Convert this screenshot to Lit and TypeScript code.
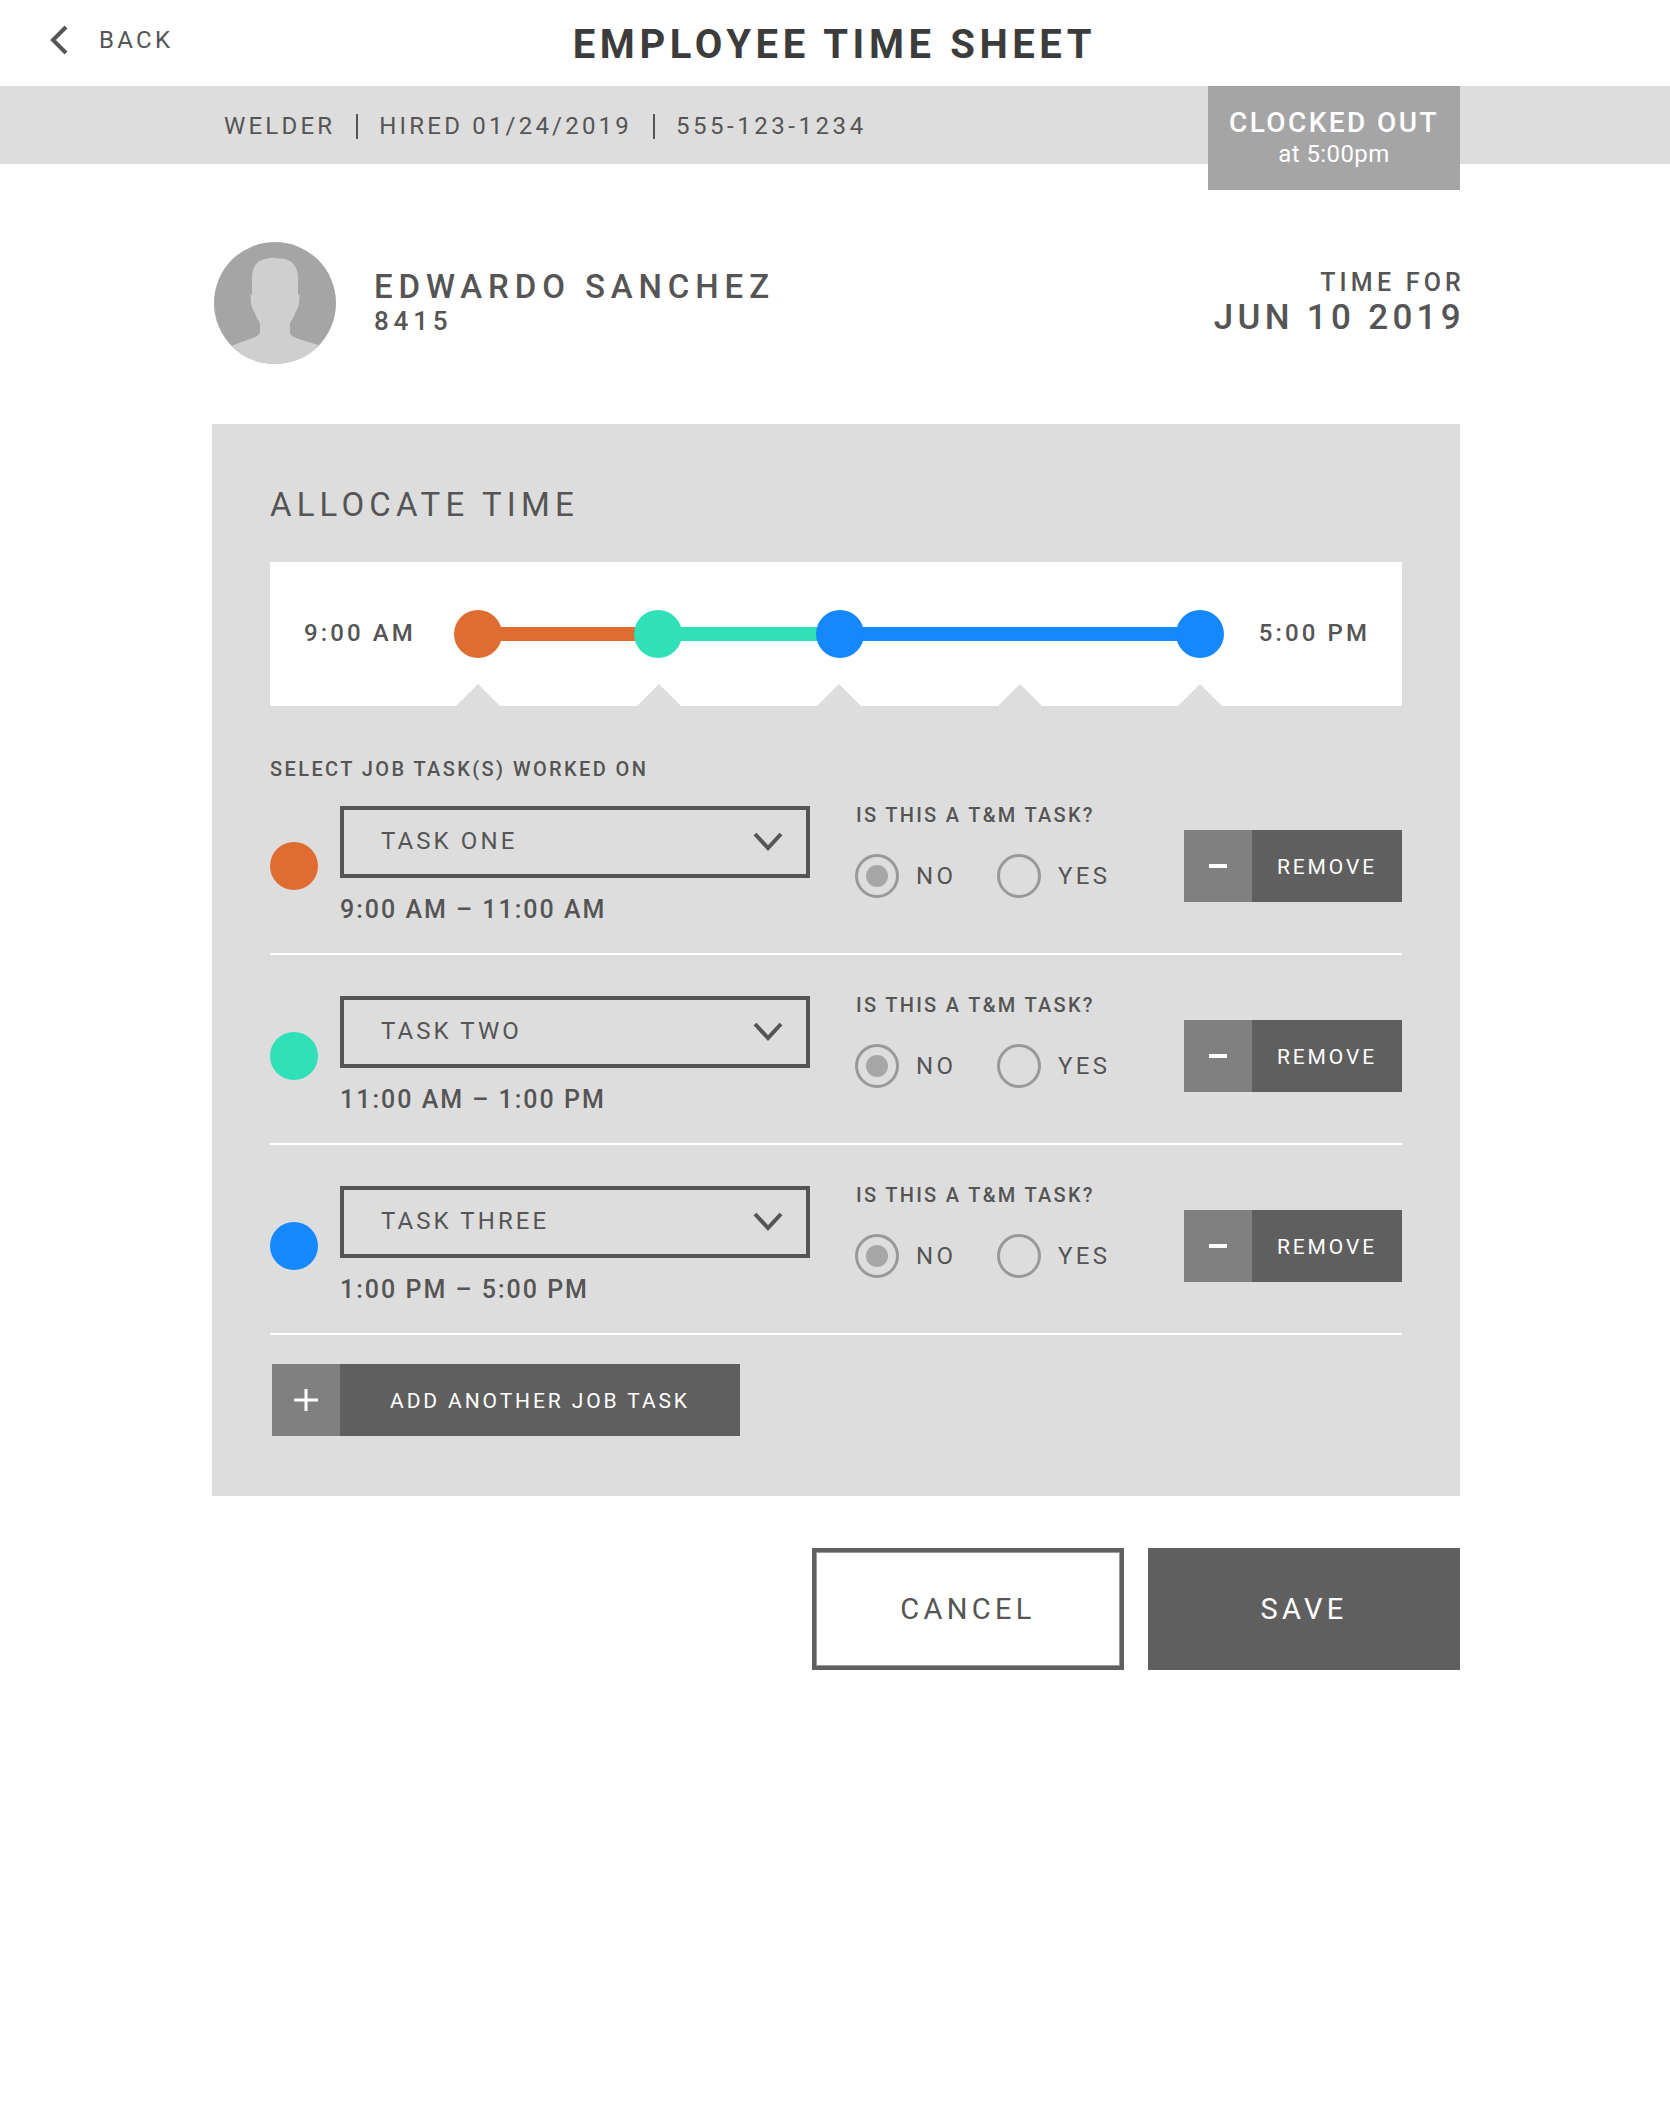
import { LitElement, html, css, svg } from "lit";
import { customElement } from "lit/decorators.js";

const ORANGE = "#df6c30";
const TEAL = "#2fe0b8";
const BLUE = "#1488fc";

const tasks = [
  { name: "TASK ONE", time: "9:00 AM – 11:00 AM", color: ORANGE },
  { name: "TASK TWO", time: "11:00 AM – 1:00 PM", color: TEAL },
  { name: "TASK THREE", time: "1:00 PM – 5:00 PM", color: BLUE },
];

// stops on the slider, offsets from the left edge of the track
const stops = [
  { w: 133, color: ORANGE },
  { w: 134, color: TEAL },
  { w: 314, color: BLUE },
];
const notches = [24, 205, 385, 566, 746];

const chevron = svg`<path d="M2 2 L15 16 L28 2" fill="none" stroke="#555" stroke-width="4"/>`;

@customElement("app-root")
export class AppRoot extends LitElement {
  static styles = css`
    :host {
      display: block;
      min-height: 2116px;
      background: #fff;
      font-family: Roboto, "Liberation Sans", sans-serif;
      color: #555;
    }
    .header {
      display: grid;
      grid-template-columns: 1fr auto 1fr;
      align-items: center;
      height: 86px;
      padding-left: 49px;
    }
    .back {
      display: flex;
      align-items: center;
      gap: 30px;
      font-size: 24px;
      letter-spacing: 3.3px;
      margin-top: -6px;
    }
    .back svg {
      width: 20px;
      height: 30px;
    }
    .title {
      font-size: 40px;
      font-weight: 700;
      letter-spacing: 4.6px;
      color: #3c3c3c;
      margin: 2px 0 0 -50px;
    }
    .subbar {
      height: 78px;
      background: #ddd;
    }
    .wrap {
      width: 1248px;
      margin-left: 212px;
    }
    .subbar .wrap {
      display: flex;
      height: 78px;
    }
    .meta {
      display: flex;
      align-items: center;
      gap: 21px;
      padding: 2px 0 0 12px;
      font-size: 24px;
      letter-spacing: 3.2px;
    }
    .meta i {
      width: 2px;
      height: 25px;
      background: #555;
    }
    .meta .phone {
      letter-spacing: 3.55px;
    }
    .status {
      margin-left: auto;
      flex: 0 0 252px;
      height: 104px;
      box-sizing: border-box;
      padding-top: 21px;
      background: #a5a5a5;
      color: #fff;
      text-align: center;
    }
    .status b {
      display: block;
      font-size: 28px;
      font-weight: 500;
      line-height: 32px;
      letter-spacing: 2.4px;
    }
    .status span {
      display: block;
      font-size: 24px;
      line-height: 30px;
      letter-spacing: 0.4px;
    }
    .profile {
      display: flex;
      align-items: center;
      margin-top: 78px;
      margin-bottom: 60px;
      height: 122px;
      padding-left: 2px;
    }
    .avatar {
      width: 122px;
      height: 122px;
      flex: none;
    }
    .who {
      margin-left: 38px;
      margin-top: -2px;
    }
    .who h2 {
      margin: 0;
      font-size: 33px;
      font-weight: 500;
      line-height: 36px;
      letter-spacing: 5.9px;
    }
    .who p {
      margin: 1px 0 0;
      font-size: 26px;
      font-weight: 500;
      line-height: 30px;
      letter-spacing: 4.8px;
    }
    .when {
      margin-left: auto;
      margin-right: -5px;
      text-align: right;
    }
    .when p {
      margin: -1px 0 0;
      font-size: 25px;
      font-weight: 500;
      line-height: 30px;
      letter-spacing: 4.2px;
    }
    .when h2 {
      margin: 0;
      font-size: 35px;
      font-weight: 500;
      line-height: 40px;
      letter-spacing: 4.3px;
    }
    .panel {
      background: #ddd;
      padding: 61px 58px 60px;
    }
    .panel h3 {
      margin: 0 0 37px;
      font-size: 33px;
      font-weight: 400;
      line-height: 40px;
      letter-spacing: 5.15px;
    }
    .slider {
      position: relative;
      display: flex;
      align-items: center;
      height: 144px;
      padding: 0 32px 0 34px;
      background: #fff;
      font-size: 24px;
      font-weight: 500;
      letter-spacing: 3.1px;
    }
    .slider .start {
      flex: 0 0 150px;
      margin-top: -2px;
    }
    .slider .end {
      margin-left: auto;
      margin-top: -2px;
    }
    .track {
      display: flex;
      align-items: center;
      width: 770px;
    }
    .knob {
      flex: none;
      width: 48px;
      height: 48px;
      border-radius: 50%;
      z-index: 1;
    }
    .seg {
      height: 14px;
      margin: 0 -1px;
    }
    .notch {
      position: absolute;
      bottom: 0;
      width: 0;
      height: 0;
      border-left: 22px solid transparent;
      border-right: 22px solid transparent;
      border-bottom: 22px solid #ddd;
      margin-left: -22px;
    }
    .section {
      margin-top: 51px;
      font-size: 20px;
      font-weight: 500;
      line-height: 24px;
      letter-spacing: 2.4px;
    }
    .row {
      display: flex;
      align-items: flex-start;
      padding: 41px 0 28px;
      border-bottom: 2px solid #fff;
    }
    .row.first {
      padding-top: 25px;
    }
    .dot {
      flex: none;
      width: 48px;
      height: 48px;
      margin: 36px 22px 0 0;
      border-radius: 50%;
    }
    .task {
      flex: 0 0 470px;
    }
    .select {
      display: flex;
      align-items: center;
      justify-content: space-between;
      box-sizing: border-box;
      height: 72px;
      padding: 0 23px 2px 37px;
      border: 4px solid #555;
      font-size: 24px;
      letter-spacing: 3.1px;
    }
    .select svg {
      width: 30px;
      height: 20px;
      margin-top: 2px;
    }
    .time {
      margin-top: 17px;
      font-size: 25px;
      font-weight: 500;
      line-height: 30px;
      letter-spacing: 2px;
    }
    .tm {
      margin-left: 45px;
    }
    .tm label {
      display: block;
      margin-left: 1px;
      font-size: 20px;
      font-weight: 500;
      line-height: 18px;
      letter-spacing: 2.3px;
    }
    .options {
      display: flex;
      margin-top: 30px;
    }
    .option {
      display: flex;
      align-items: center;
      gap: 17px;
      width: 142px;
      font-size: 24px;
      letter-spacing: 3.4px;
    }
    .radio {
      display: flex;
      align-items: center;
      justify-content: center;
      box-sizing: border-box;
      width: 44px;
      height: 44px;
      border: 3px solid #999;
      border-radius: 50%;
    }
    .radio i {
      width: 22px;
      height: 22px;
      border-radius: 50%;
      background: #a6a6a6;
    }
    .btn {
      display: flex;
      align-items: stretch;
      height: 72px;
      background: #5f5f5f;
      color: #fff;
    }
    .btn .icon {
      display: flex;
      align-items: center;
      justify-content: center;
      flex: 0 0 68px;
      background: #808080;
    }
    .btn .label {
      display: flex;
      align-items: center;
      justify-content: center;
      flex: 1;
      padding-top: 2px;
      font-size: 21px;
      letter-spacing: 2.9px;
    }
    .remove {
      width: 218px;
      margin: 24px 0 0 auto;
    }
    .add {
      width: 468px;
      margin: 29px 0 0 2px;
    }
    .actions {
      display: flex;
      justify-content: flex-end;
      gap: 24px;
      margin-top: 52px;
    }
    .action {
      display: flex;
      align-items: center;
      justify-content: center;
      box-sizing: border-box;
      width: 312px;
      height: 122px;
      border: 4px solid #5f5f5f;
      box-shadow: inset 0 0 0 1px #9a9a9a;
      font-size: 29px;
      letter-spacing: 4.3px;
    }
    .action.save {
      background: #5f5f5f;
      box-shadow: none;
      color: #fff;
    }
  `;

  private renderRow(t: (typeof tasks)[number], i: number) {
    return html`
      <div class="row ${i === 0 ? "first" : ""}">
        <div class="dot" style="background:${t.color}"></div>
        <div class="task">
          <div class="select">
            <span>${t.name}</span>
            <svg viewBox="0 0 30 20">${chevron}</svg>
          </div>
          <div class="time">${t.time}</div>
        </div>
        <div class="tm">
          <label>IS THIS A T&amp;M TASK?</label>
          <div class="options">
            <div class="option"><span class="radio"><i></i></span>NO</div>
            <div class="option"><span class="radio"></span>YES</div>
          </div>
        </div>
        <div class="btn remove">
          <div class="icon">
            <svg width="18" height="4" viewBox="0 0 18 4"><rect width="18" height="4" fill="#fff"/></svg>
          </div>
          <div class="label">REMOVE</div>
        </div>
      </div>
    `;
  }

  render() {
    return html`
      <div class="header">
        <div class="back">
          <svg viewBox="0 0 20 30"><path d="M17 2 L4 15 L17 28" fill="none" stroke="#555" stroke-width="4"/></svg>
          <span>BACK</span>
        </div>
        <div class="title">EMPLOYEE TIME SHEET</div>
        <div></div>
      </div>
      <div class="subbar">
        <div class="wrap">
          <div class="meta">
            <span>WELDER</span><i></i><span>HIRED 01/24/2019</span><i></i><span class="phone">555-123-1234</span>
          </div>
          <div class="status"><b>CLOCKED OUT</b><span>at 5:00pm</span></div>
        </div>
      </div>
      <div class="wrap">
        <div class="profile">
          <svg class="avatar" viewBox="0 0 122 122">
            <defs><clipPath id="av"><circle cx="61" cy="61" r="61"/></clipPath></defs>
            <circle cx="61" cy="61" r="61" fill="#a5a5a5"/>
            <path clip-path="url(#av)" fill="#cfcfcf" d="M61 16 C56 15 52 17 48 18 C42 20 38 26 38 36 L38 52 L36.5 53 L37 62 C38 66 40 70 41 71 C42 76 45 78 46 82 L46 90 C46 93 42 95 36 97 L17 104 L10 122 L112 122 L104 103 L85 97 C79 95 76 93 76 90 L76 82 C77 78 80 76 81 71 C82 70 84 66 85 62 L85.5 53 L84 52 L84 36 C84 26 80 21 74 18 C70 16 66 17 61 16 Z"/>
          </svg>
          <div class="who">
            <h2>EDWARDO SANCHEZ</h2>
            <p>8415</p>
          </div>
          <div class="when">
            <p>TIME FOR</p>
            <h2>JUN 10 2019</h2>
          </div>
        </div>
        <div class="panel">
          <h3>ALLOCATE TIME</h3>
          <div class="slider">
            <span class="start">9:00 AM</span>
            <div class="track">
              ${stops.map(
                (s) => html`
                  <div class="knob" style="background:${s.color}"></div>
                  <div class="seg" style="width:${s.w + 2}px;background:${s.color}"></div>
                `
              )}
              <div class="knob" style="background:${BLUE}"></div>
            </div>
            <span class="end">5:00 PM</span>
            ${notches.map((n) => html`<div class="notch" style="left:${184 + n}px"></div>`)}
          </div>
          <div class="section">SELECT JOB TASK(S) WORKED ON</div>
          ${tasks.map((t, i) => this.renderRow(t, i))}
          <div class="btn add">
            <div class="icon">
              <svg width="24" height="24" viewBox="0 0 24 24"><path d="M0 12 H24 M12 1 V23" stroke="#fff" stroke-width="3"/></svg>
            </div>
            <div class="label">ADD ANOTHER JOB TASK</div>
          </div>
        </div>
        <div class="actions">
          <div class="action">CANCEL</div>
          <div class="action save">SAVE</div>
        </div>
      </div>
    `;
  }
}
